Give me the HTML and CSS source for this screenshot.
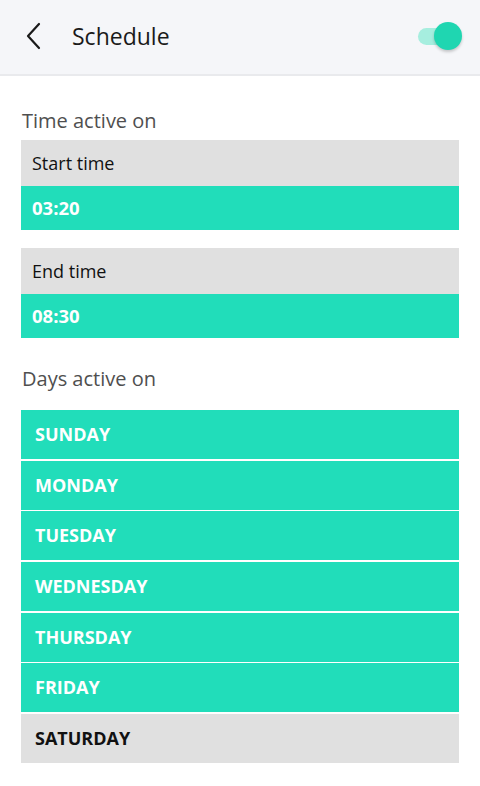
FILE: index.html
```html
<!DOCTYPE html>
<html lang="en">
<head>
    <meta charset="UTF-8">
    <title>Schedule</title>
    <link rel="stylesheet" href="styles.css">
</head>
<body>
    <header class="topbar">
        <svg class="back" width="20" height="28" viewBox="0 0 20 28" fill="none" stroke="#1a1a1a" stroke-width="2.2" stroke-linecap="round" stroke-linejoin="round">
            <polyline points="14 2 3 14 14 26"></polyline>
        </svg>
        <h1>Schedule</h1>
        <div class="toggle">
            <span class="track"></span>
            <span class="thumb"></span>
        </div>
    </header>

    <main class="content">
        <h2 class="section-label">Time active on</h2>
        <div class="time-box">
            <div class="time-name">Start time</div>
            <div class="time-value">03:20</div>
        </div>
        <div class="time-box">
            <div class="time-name">End time</div>
            <div class="time-value">08:30</div>
        </div>

        <h2 class="section-label days-label">Days active on</h2>
        <ul class="days">
            <li class="day on">Sunday</li>
            <li class="day on">Monday</li>
            <li class="day on">Tuesday</li>
            <li class="day on">Wednesday</li>
            <li class="day on">Thursday</li>
            <li class="day on">Friday</li>
            <li class="day">Saturday</li>
        </ul>
    </main>
</body>
</html>
```

FILE: styles.css
```css
body {
    margin: 0;
    font-family: "Open Sans", Lato, sans-serif;
    background: #ffffff;
    color: #1a1a1a;
}
.topbar {
    display: flex;
    align-items: center;
    height: 74px;
    padding: 0 18px 0 25px;
    background: #f5f6f9;
    border-bottom: 2px solid #e9eaed;
}
.back {
    display: block;
    margin-top: -2px;
}
.topbar h1 {
    flex: 1;
    margin: -3px 0 0 27px;
    font-size: 23px;
    font-weight: 400;
}
.toggle {
    position: relative;
    width: 44px;
    height: 30px;
    margin-top: -3px;
}
.toggle .track {
    position: absolute;
    left: 0;
    top: 7px;
    width: 36px;
    height: 17px;
    border-radius: 9px;
    background: #a6eedf;
}
.toggle .thumb {
    position: absolute;
    right: 0;
    top: 1px;
    width: 28px;
    height: 28px;
    border-radius: 50%;
    background: #1fd6b1;
    box-shadow: 0 2px 3px rgba(0, 0, 0, 0.2);
}
.content {
    padding: 31px 21px 20px;
}
.section-label {
    margin: 0 0 6px 1px;
    font-size: 20px;
    line-height: 27px;
    font-weight: 400;
    color: #4f4f4f;
}
.days-label {
    margin-top: 27px;
    margin-bottom: 18px;
}
.time-box {
    margin-bottom: 18px;
}
.time-name {
    height: 46px;
    line-height: 46px;
    padding-left: 11px;
    background: #e0e0e0;
    font-size: 18px;
    color: #111111;
}
.time-value {
    height: 44px;
    line-height: 44px;
    padding-left: 11px;
    background: #21ddba;
    font-size: 18.5px;
    font-weight: 700;
    color: #ffffff;
}
.days {
    display: flex;
    flex-direction: column;
    gap: 1.7px;
    margin: 0;
    padding: 0;
    list-style: none;
}
.day {
    height: 49px;
    line-height: 49px;
    padding-left: 14px;
    background: #e0e0e0;
    font-size: 18px;
    font-weight: 700;
    text-transform: uppercase;
    color: #111111;
}
.day.on {
    background: #21ddba;
    color: #ffffff;
}
```
